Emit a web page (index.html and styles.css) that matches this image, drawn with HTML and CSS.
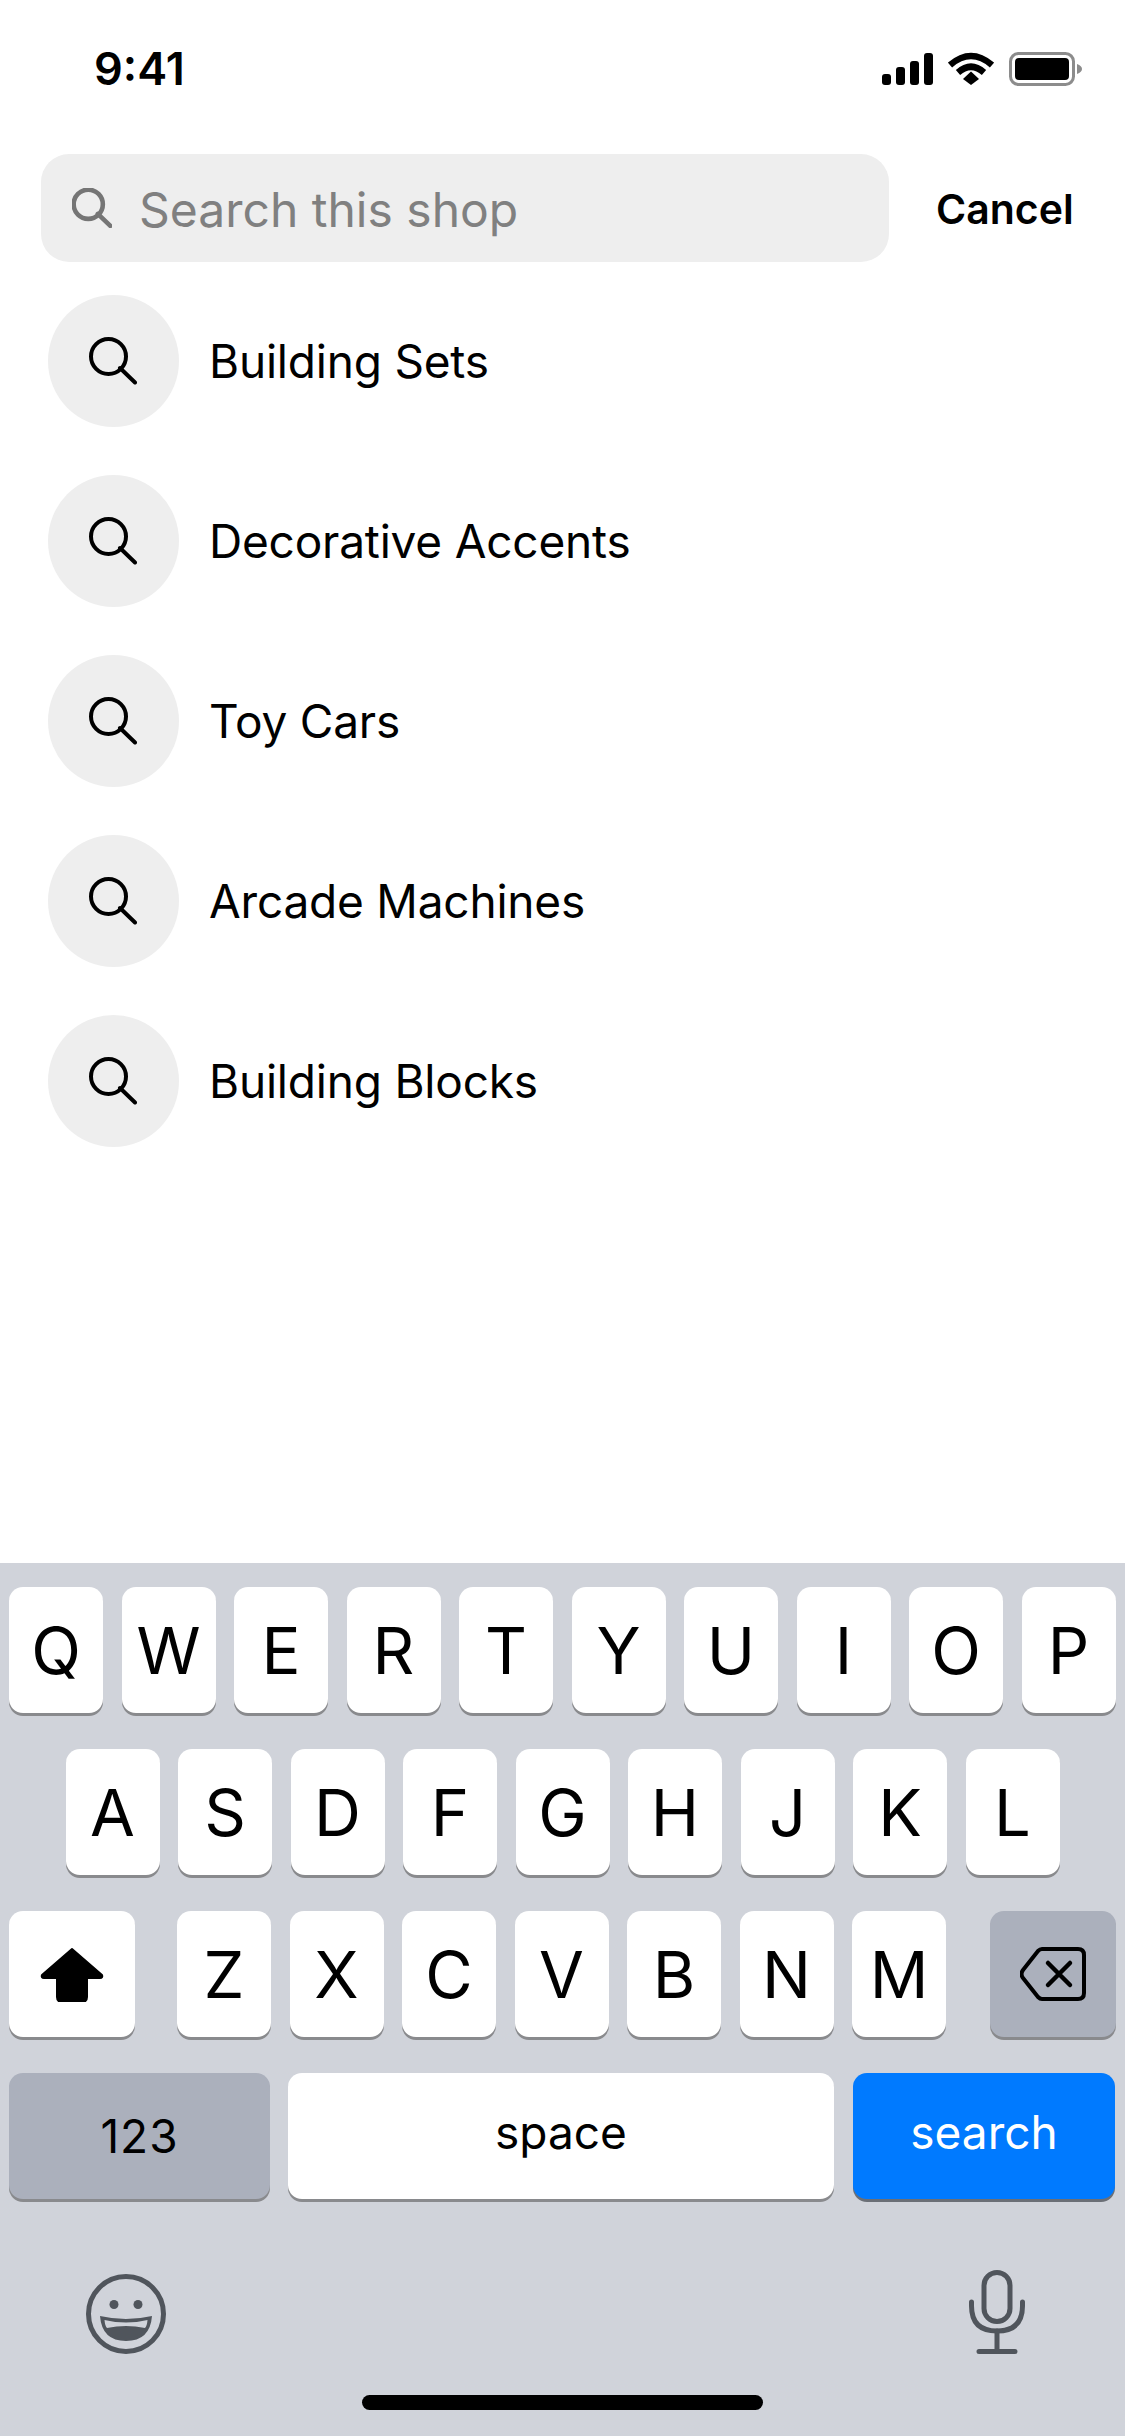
FILE: index.html
```html
<!DOCTYPE html>
<html lang="en">
  <head>
    <meta charset="UTF-8" />
    <title>Search this shop</title>
    <link rel="stylesheet" href="styles.css">
  </head>
  <body>
    <svg class="defs" width="0" height="0">
      <symbol id="lens" viewBox="0 0 48 48">
        <circle cx="19.500" cy="19.500" r="17.500" fill="none" stroke="currentColor" />
        <path d="M31 31 L46 45.500" fill="none" stroke="currentColor" stroke-linecap="round" />
      </symbol>
    </svg>
    <div class="screen">
      <div class="status-bar">
        <span class="time">9:41</span>
        <div class="status-icons">
          <svg class="signal" viewBox="0 0 51 32" width="51" height="32">
            <rect x="0" y="21" width="9" height="11" rx="3" />
            <rect x="14" y="14" width="9" height="18" rx="3" />
            <rect x="28" y="8" width="9" height="24" rx="3" />
            <rect x="42" y="0" width="9" height="32" rx="3" />
          </svg>
          <svg class="wifi" viewBox="0 0 46 33" width="46" height="33">
            <path d="M2 13 Q23 -5 44 13" fill="none" stroke="#000" stroke-width="6.5" />
            <path d="M10 20.500 Q23 9 36 20.500" fill="none" stroke="#000" stroke-width="6.5" />
            <path d="M15 27 L23 19.500 L31 27 L23 33 Z" />
          </svg>
          <svg class="battery" viewBox="0 0 73 34" width="73" height="34">
            <rect x="1.500" y="1.500" width="63" height="31" rx="8" fill="none" stroke="#8c8c8c" stroke-width="3" />
            <rect x="6" y="6" width="54" height="22" rx="4" />
            <path d="M68 12 Q73 14 73 17 Q73 20 68 22 Z" fill="#8c8c8c" />
          </svg>
        </div>
      </div>

      <div class="search-row">
        <div class="search-box">
          <svg class="search-icon" width="40" height="40"><use href="#lens" /></svg>
          <span class="placeholder">Search this shop</span>
        </div>
        <span class="cancel">Cancel</span>
      </div>

      <ul class="suggestions">
        <li class="suggestion">
          <span class="circle"><svg class="lens" width="48" height="48"><use href="#lens" /></svg></span>
          <span>Building Sets</span>
        </li>
        <li class="suggestion">
          <span class="circle"><svg class="lens" width="48" height="48"><use href="#lens" /></svg></span>
          <span>Decorative Accents</span>
        </li>
        <li class="suggestion">
          <span class="circle"><svg class="lens" width="48" height="48"><use href="#lens" /></svg></span>
          <span>Toy Cars</span>
        </li>
        <li class="suggestion">
          <span class="circle"><svg class="lens" width="48" height="48"><use href="#lens" /></svg></span>
          <span>Arcade Machines</span>
        </li>
        <li class="suggestion">
          <span class="circle"><svg class="lens" width="48" height="48"><use href="#lens" /></svg></span>
          <span>Building Blocks</span>
        </li>
      </ul>

      <div class="keyboard">
        <div class="key-row">
          <div class="key">Q</div><div class="key">W</div><div class="key">E</div><div class="key">R</div><div class="key">T</div>
          <div class="key">Y</div><div class="key">U</div><div class="key">I</div><div class="key">O</div><div class="key">P</div>
        </div>
        <div class="key-row center">
          <div class="key">A</div><div class="key">S</div><div class="key">D</div><div class="key">F</div><div class="key">G</div>
          <div class="key">H</div><div class="key">J</div><div class="key">K</div><div class="key">L</div>
        </div>
        <div class="key-row spread">
          <div class="key wide">
            <svg width="64" height="55" viewBox="0 0 64 55">
              <path d="M32 2 L62 28 Q63 31 60 31 H47 V50 Q47 55 42 55 H22 Q17 55 17 50 V31 H4 Q1 31 2 28 Z" stroke="#000" stroke-width="2" stroke-linejoin="round" />
            </svg>
          </div>
          <div class="letters">
            <div class="key">Z</div><div class="key">X</div><div class="key">C</div><div class="key">V</div>
            <div class="key">B</div><div class="key">N</div><div class="key">M</div>
          </div>
          <div class="key wide gray">
            <svg width="66" height="54" viewBox="0 0 66 54">
              <path d="M22 2 H58 Q64 2 64 8 V46 Q64 52 58 52 H22 Q20 52 18 50 L3 31 Q0 27 3 23 L18 4 Q20 2 22 2 Z" fill="none" stroke="#000" stroke-width="4" stroke-linejoin="round" />
              <path d="M28 16 L50 38 M50 16 L28 38" fill="none" stroke="#000" stroke-width="4.500" stroke-linecap="round" />
            </svg>
          </div>
        </div>
        <div class="key-row bottom-row">
          <div class="key gray action nums">123</div>
          <div class="key space action raised">space</div>
          <div class="key blue action raised">search</div>
        </div>
        <div class="kb-tools">
          <svg width="80" height="80" viewBox="0 0 80 80">
            <circle cx="40" cy="40" r="37.500" fill="none" stroke="#50555c" stroke-width="5" />
            <circle cx="28" cy="30.500" r="4.500" fill="#50555c" />
            <circle cx="52" cy="30.500" r="4.500" fill="#50555c" />
            <path d="M14 42 Q40 48 66 42 Q64 67 40 67 Q16 67 14 42 Z" fill="#50555c" />
            <path d="M18.500 46 Q40 51 61.500 46 Q61 52 59 54 Q40 50 21 54 Q19 52 18.500 46 Z" fill="#d0d3da" />
          </svg>
          <svg width="56" height="84" viewBox="0 0 56 84">
            <rect x="15" y="2.500" width="26" height="49" rx="13" fill="none" stroke="#50555c" stroke-width="5" />
            <path d="M2.500 32 V36 Q2.500 61 28 61 Q53.500 61 53.500 36 V32" fill="none" stroke="#50555c" stroke-width="5" stroke-linecap="round" />
            <path d="M28 61 V81 M10 81.500 H46" fill="none" stroke="#50555c" stroke-width="5" stroke-linecap="round" />
          </svg>
        </div>
        <div class="home-bar"></div>
      </div>
    </div>
  </body>
</html>
```

FILE: styles.css
```css
* {
  box-sizing: border-box;
  margin: 0;
  padding: 0;
}

body {
  font-family: Inter, "Liberation Sans", sans-serif;
  background: #ffffff;
  color: #000000;
}

.defs {
  display: block;
  height: 0;
}

.screen {
  width: 1125px;
  height: 2436px;
  display: flex;
  flex-direction: column;
  overflow: hidden;
}

.status-bar {
  height: 154px;
  flex: none;
  display: flex;
  justify-content: space-between;
  align-items: flex-start;
  padding: 52px 43px 0 94px;
}

.time {
  font-size: 45px;
  font-weight: 600;
  line-height: 34px;
}

.status-icons {
  display: flex;
  align-items: flex-start;
  gap: 15px;
}

.signal {
  margin-top: 1px;
}

.search-row {
  flex: none;
  display: flex;
  align-items: center;
  padding-left: 41px;
}

.search-box {
  width: 848px;
  height: 108px;
  background: #eeeeee;
  border-radius: 28px;
  display: flex;
  align-items: center;
  padding-left: 31px;
  gap: 27px;
}

.search-icon {
  color: #757575;
  stroke-width: 5.5px;
}

.placeholder {
  font-size: 48px;
  padding-top: 2px;
  color: #808080;
}

.cancel {
  margin-left: 47px;
  padding-top: 2px;
  font-size: 41px;
  font-weight: 600;
}

.suggestions {
  list-style: none;
  flex: 1;
  padding: 33px 0 0 48px;
  display: flex;
  flex-direction: column;
  gap: 48px;
}

.suggestion {
  display: flex;
  align-items: center;
  gap: 30px;
  font-size: 46px;
  letter-spacing: -0.2px;
}

.circle {
  width: 131px;
  height: 132px;
  padding-right: 2px;
  border-radius: 50%;
  background: #eeeeee;
  display: flex;
  justify-content: center;
  align-items: center;
}

.lens {
  stroke-width: 4px;
}

.keyboard {
  flex: none;
  height: 873px;
  background: #d0d3da;
  padding: 24px 9px 0;
  display: flex;
  flex-direction: column;
  gap: 36px;
}

.key-row {
  display: flex;
  gap: 18.5px;
  height: 126px;
}

.key-row.center {
  justify-content: center;
}

.key-row.spread {
  justify-content: space-between;
}

.letters {
  display: flex;
  gap: 18.5px;
  margin-left: -2px;
}

.key {
  width: 94px;
  height: 126px;
  background: #ffffff;
  border-radius: 14px;
  box-shadow: 0 3px 0 #898a8d;
  display: flex;
  justify-content: center;
  align-items: center;
  font-size: 65px;
}

.key.wide {
  width: 126px;
}

.key.gray {
  background: #abb0bc;
}

.bottom-row {
  gap: 18px;
}

.key.action {
  font-size: 46px;
}

.key.nums {
  width: 261px;
  letter-spacing: 1px;
}

.key.space {
  width: 546px;
}

.key.raised {
  padding-bottom: 8px;
}

.key.blue {
  width: 262px;
  margin-left: 1px;
  background: #007aff;
  color: #ffffff;
  box-shadow: 0 3px 0 #6b6f76;
}

.kb-tools {
  display: flex;
  justify-content: space-between;
  align-items: flex-end;
  padding: 0 91px 0 77px;
  margin-top: 35px;
}

.home-bar {
  width: 401px;
  height: 15px;
  margin: 5px auto 0 353px;
  border-radius: 8px;
  background: #000000;
}
```
